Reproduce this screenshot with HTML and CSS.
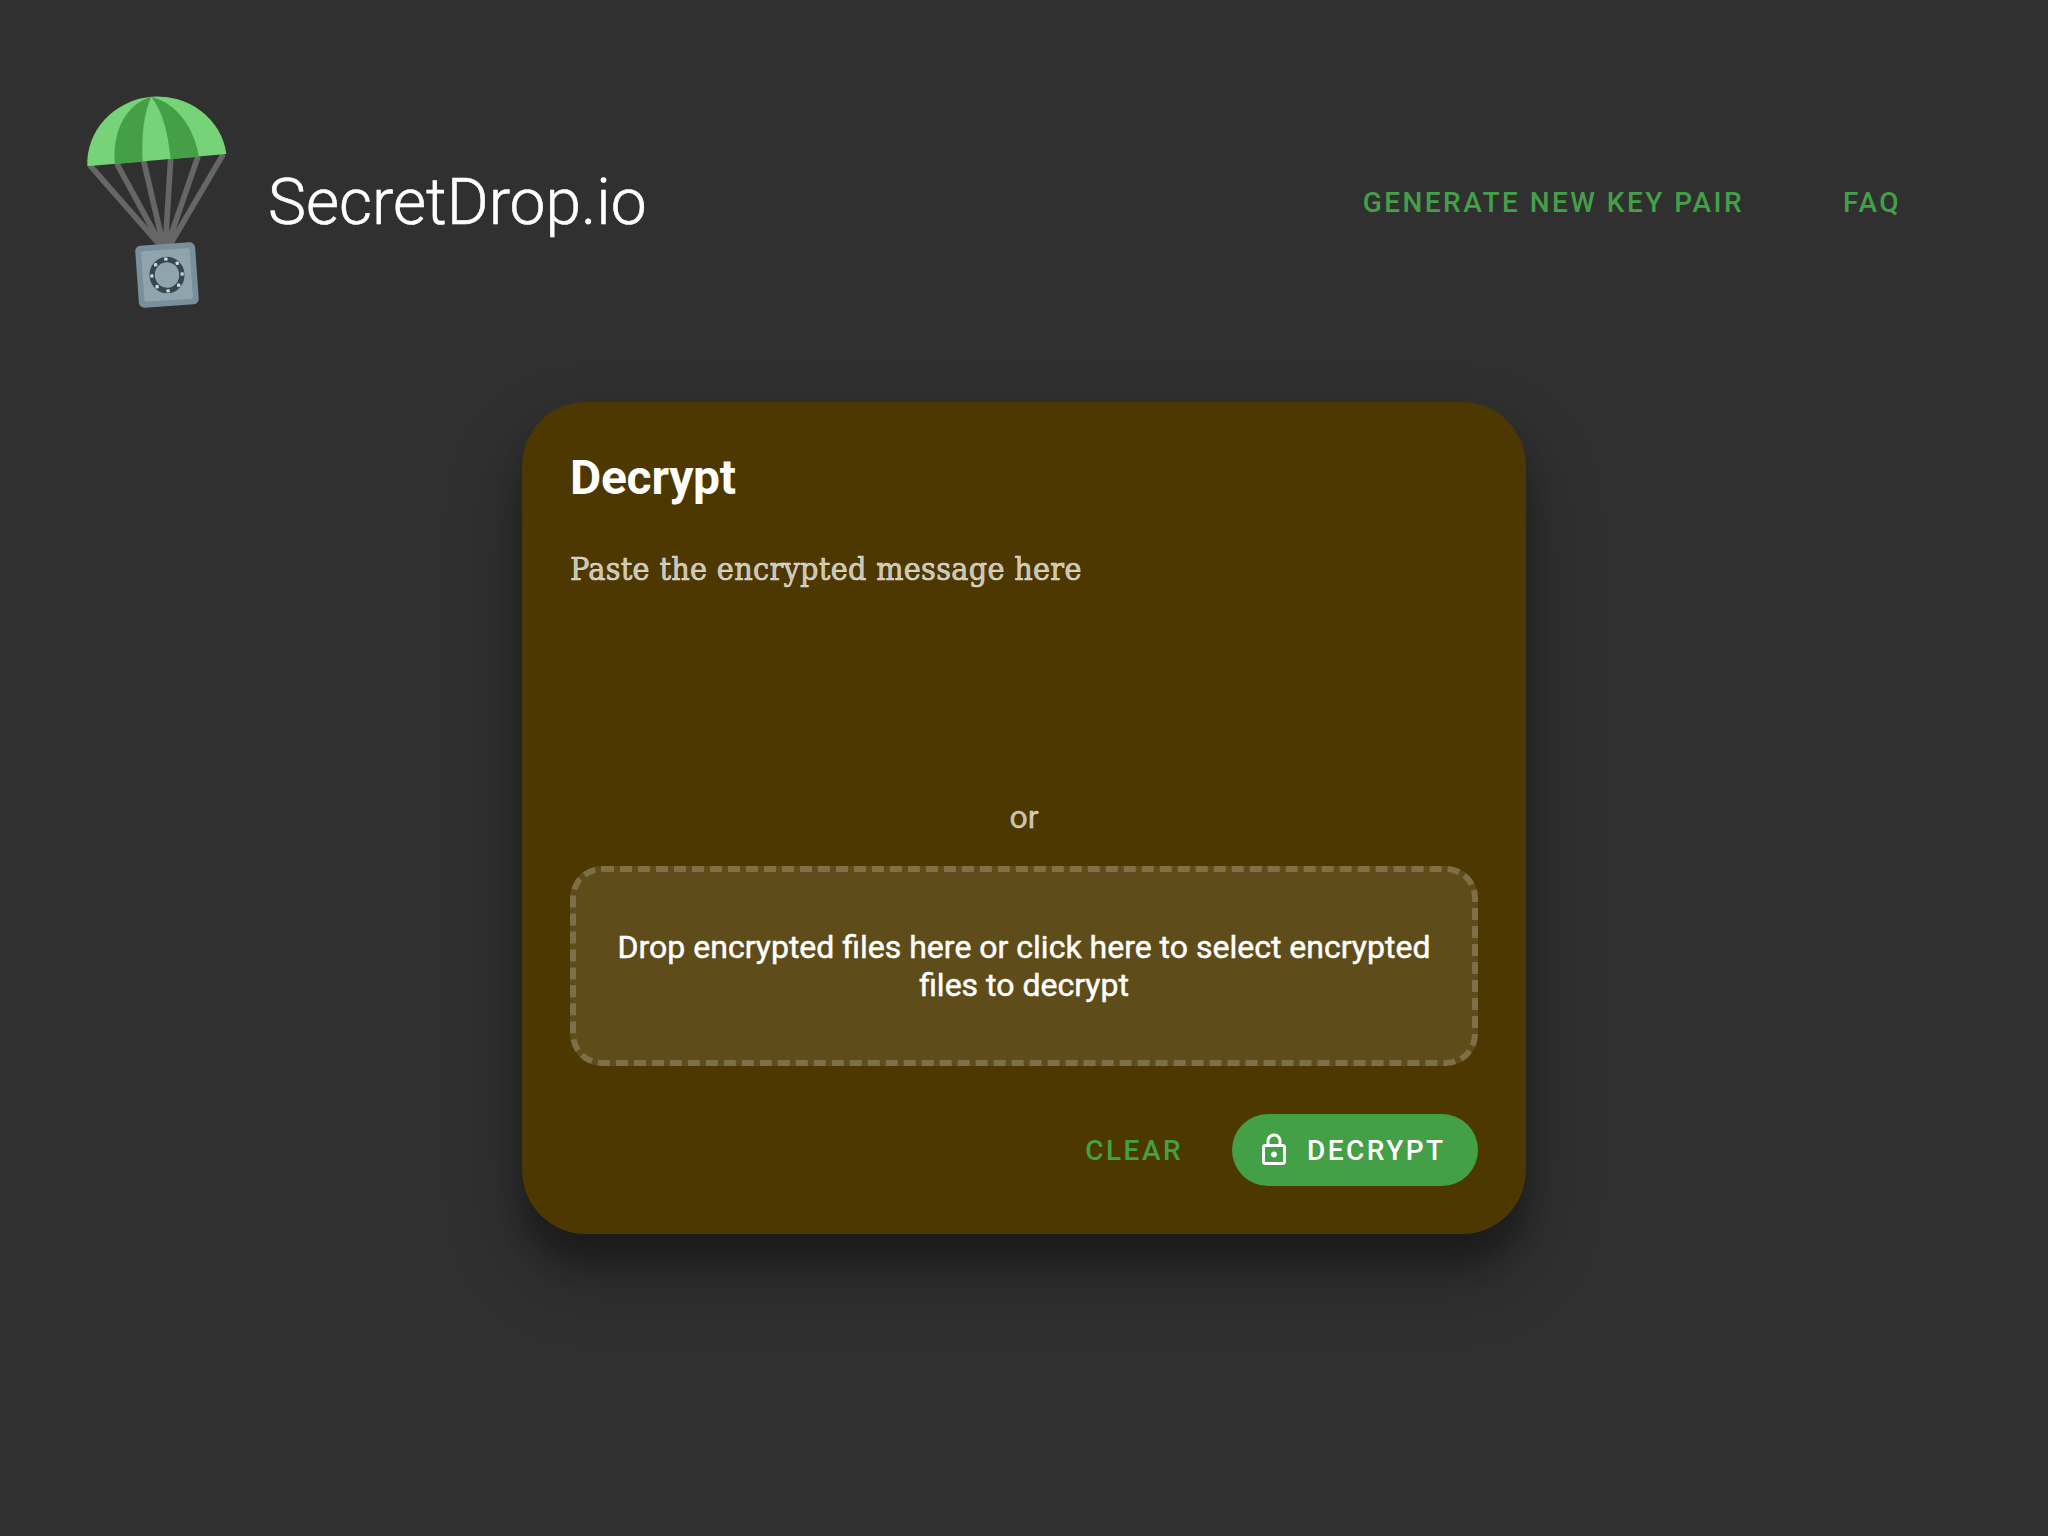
FILE: index.html
```html
<!DOCTYPE html>
<html lang="en">
<head>
<meta charset="utf-8">
<title>SecretDrop.io</title>
<link rel="stylesheet" href="styles.css">
</head>
<body>
<header class="header">
  <a class="brand">
    <svg class="logo" viewBox="0 0 540 720" aria-hidden="true">
      <g stroke="#666" stroke-width="17" fill="none">
        <path d="M60 256 274 500M140 250 276 500M221 243 281 500M302 236 286 500M384 229 291 500M460 222 297 500"/>
      </g>
      <path fill="#77d377" d="M52 259A209.500 199 -5 0 1 469 222Z"/>
      <path fill="#449f46" d="M244 50C170 72 126 150 135 252L218 245C214 165 222 96 244 50ZM244 50C278 96 294 155 302 238L387 230C371 138 318 69 244 50Z"/>
      <g transform="rotate(-4 291 585)">
        <rect x="201" y="492" width="180" height="186" rx="16" fill="#78909c"/>
        <rect x="218" y="509" width="146" height="152" rx="6" fill="#90a4ae"/>
        <ellipse cx="291" cy="585" rx="44.500" ry="46.500" fill="none" stroke="#37474f" stroke-width="16"/>
        <g fill="#cfd8dc">
          <rect x="286" y="533" width="10" height="9"/><rect x="286" y="628" width="10" height="9"/>
          <rect x="241" y="580" width="9" height="10"/><rect x="332" y="580" width="9" height="10"/>
          <rect x="254" y="547" width="10" height="10" rx="2"/><rect x="319" y="547" width="10" height="10" rx="2"/>
          <rect x="254" y="613" width="10" height="10" rx="2"/><rect x="319" y="613" width="10" height="10" rx="2"/>
        </g>
      </g>
    </svg>
    <span class="brand-name">SecretDrop.io</span>
  </a>
  <nav class="nav">
    <a class="link">GENERATE NEW KEY PAIR</a>
    <a class="link">FAQ</a>
  </nav>
</header>
<main class="card">
  <h1 class="title">Decrypt</h1>
  <div class="message">Paste the encrypted message here</div>
  <p class="or">or</p>
  <div class="dropzone">Drop encrypted files here or click here to select encrypted files to decrypt</div>
  <div class="actions">
    <a class="link">CLEAR</a>
    <a class="button">
      <svg class="icon" viewBox="0 0 24 24" aria-hidden="true"><path fill="currentColor" d="M18 8h-1V6c0-2.760-2.240-5-5-5S7 3.240 7 6v2H6c-1.100 0-2 .9-2 2v10c0 1.100.9 2 2 2h12c1.100 0 2-.9 2-2V10c0-1.100-.9-2-2-2zM9 6c0-1.660 1.340-3 3-3s3 1.340 3 3v2H9V6zm9 14H6V10h12v10zm-6-3c1.100 0 2-.9 2-2s-.9-2-2-2-2 .9-2 2 .9 2 2 2z"/></svg>
      <span class="button-label">DECRYPT</span>
    </a>
  </div>
</main>
</body>
</html>
```
FILE: styles.css
```css
* { box-sizing: border-box; }
body {
  margin: 0;
  min-height: 1536px;
  background: #303030;
  color: #fff;
  font-family: Roboto, "Liberation Sans", sans-serif;
}
.header {
  display: flex;
  align-items: center;
  justify-content: space-between;
  height: 402px;
  padding: 0 147px 0 70px;
}
.brand { display: flex; align-items: center; gap: 18px; padding-bottom: 2px; }
.logo { width: 180px; height: 240px; }
.brand-name {
  padding-top: 5px;
  font-size: 64px;
  font-weight: 300;
  line-height: 76px;
  -webkit-text-stroke: 0.6px currentColor;
}
.nav { display: flex; gap: 99px; padding-top: 3px; }
.link, .button {
  font-size: 28px;
  font-weight: 500;
  line-height: 72px;
  letter-spacing: 2.46px;
  white-space: nowrap;
}
.link { color: #43a047; }
.card {
  width: 1004px;
  height: 832px;
  margin: 0 auto;
  padding: 48px;
  border-radius: 64px;
  background: #4c3800;
  box-shadow: 0 38px 76px rgba(0,0,0,.3), 0 30px 24px rgba(0,0,0,.22);
}
.title { margin: 0; font-size: 48px; font-weight: 700; line-height: 56px; letter-spacing: -0.25px; }
.message {
  height: 244px;
  margin-top: 43px;
  color: rgba(255,255,255,.7);
  font-family: "Roboto Slab", "DejaVu Serif Condensed", "DejaVu Serif", serif;
  font-size: 32px;
  line-height: 40px;
  letter-spacing: 0.3px;
  -webkit-text-stroke: 0.7px currentColor;
}
.or {
  margin: 5px 0 30px;
  color: rgba(255,255,255,.7);
  font-size: 32px;
  line-height: 38px;
  text-align: center;
  -webkit-text-stroke: 0.4px currentColor;
}
.dropzone {
  height: 200px;
  padding: 56px 26px;
  border: 6px dashed rgba(255,255,255,.2);
  border-radius: 32px;
  background: rgba(255,255,255,.1);
  font-size: 32px;
  line-height: 38px;
  text-align: center;
  -webkit-text-stroke: 0.5px currentColor;
}
.actions { display: flex; justify-content: flex-end; gap: 49px; margin-top: 48px; }
.actions .link { padding-top: 1px; }
.button {
  display: flex;
  align-items: center;
  gap: 15px;
  width: 246px;
  height: 72px;
  padding: 0 24px;
  border-radius: 36px;
  background: #43a047;
}
.button-label { padding-top: 2px; }
.icon { flex: none; width: 36px; height: 36px; }
```
